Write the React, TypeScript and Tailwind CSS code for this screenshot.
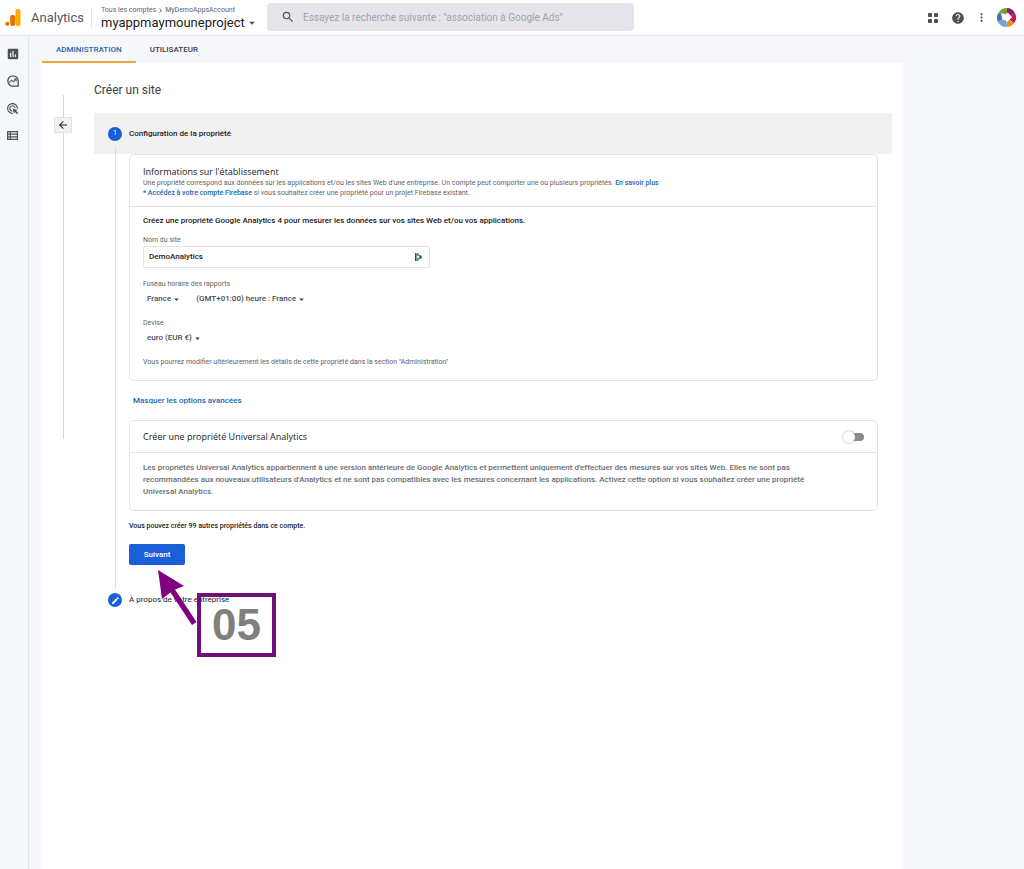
import { useState } from "react";
import {
  MdAdsClick,
  MdArrowBack,
  MdArrowDropDown,
  MdAssessment,
  MdChevronRight,
  MdEdit,
  MdHelp,
  MdMoreVert,
  MdSearch,
} from "react-icons/md";

const timezones = ["(GMT+01:00) heure : France"];
const countries = ["France", "Belgique", "Suisse"];
const currencies = ["euro (EUR €)", "dollar (USD $)"];

const AnalyticsLogo = () => (
  <svg width="16" height="18" viewBox="0 0 16 18" aria-hidden="true">
    <rect x="10.5" y="0" width="5" height="17" rx="2" fill="#f9ab00" />
    <rect x="5.2" y="6" width="5" height="11" rx="2" fill="#e37400" />
    <circle cx="2.3" cy="14.800" r="2.100" fill="#e37400" />
  </svg>
);

const AppsIcon = () => (
  <svg width="10" height="10" viewBox="0 0 10 10" fill="#4f5256" aria-hidden="true">
    <rect x="0" y="0" width="4" height="4" rx="0.7" />
    <rect x="6" y="0" width="4" height="4" rx="0.7" />
    <rect x="0" y="6" width="4" height="4" rx="0.7" />
    <rect x="6" y="6" width="4" height="4" rx="0.7" />
  </svg>
);

const Avatar = () => (
  <svg width="19" height="19" viewBox="0 0 20 20" aria-hidden="true">
    <path d="M10 10 L10 0 A10 10 0 0 1 19 5.5 Z" fill="#8c1d6c" />
    <path d="M10 10 L19 5.5 A10 10 0 0 1 18 16 Z" fill="#c2185b" />
    <path d="M10 10 L18 16 A10 10 0 0 1 10 20 Z" fill="#f08a24" />
    <path d="M10 10 L10 20 A10 10 0 0 1 1 14.5 Z" fill="#6fa4e0" />
    <path d="M10 10 L1 14.5 A10 10 0 0 1 1.5 5 Z" fill="#4a6fb3" />
    <path d="M10 10 L1.5 5 A10 10 0 0 1 10 0 Z" fill="#6fa92f" />
    <path d="M4.500 5.500 L9.500 6.500 L11.500 4.800 L15.800 9.800 L10.500 15 L9.500 13.200 L5.500 12 Z" fill="#fff" />
  </svg>
);

const ExploreIcon = () => (
  <svg width="12" height="12" viewBox="0 0 12 12" fill="none" stroke="#4f5256" aria-hidden="true">
    <path d="M11.2 11.2 H6 A5.2 5.2 0 1 1 11.2 6 Z" strokeWidth="1.3" />
    <path d="M2 7.6 L4.6 5.2 L6.4 6.8 L9 4.2 M6.9 4 H9.2 V6.2" strokeWidth="1.1" />
  </svg>
);

const TableIcon = () => (
  <svg width="11" height="9" viewBox="0 0 11 9" fill="none" stroke="#4f5256" aria-hidden="true">
    <path d="M0.6 0.6 H10.4 V8.4 H0.6 Z M0.6 3.2 H10.4 M0.6 5.8 H10.4 M3.3 0.6 V8.4" strokeWidth="1.2" />
  </svg>
);

const DashlaneIcon = () => (
  <svg width="7" height="8" viewBox="0 0 7 8" fill="#1d5a5c" aria-hidden="true">
    <rect x="0" y="0" width="1.6" height="8" />
    <path d="M2.3 0 L3.6 0.6 V3 H2.3 Z M2.3 4.8 H3.6 V7.4 L2.3 8 Z" />
    <path d="M4.3 1.6 L6.8 3 V5 L4.3 6.4 Z" />
  </svg>
);

const Dropdown = ({ label, options }: { label: string; options: string[] }) => (
  <div className="flex items-center">
    <select
      aria-label={label}
      className="field-sizing-content h-4 appearance-none bg-transparent pr-3 text-[8px] font-medium text-[#4a4d51] outline-none"
    >
      {options.map((o) => (
        <option key={o}>{o}</option>
      ))}
    </select>
    <MdArrowDropDown size={11} className="pointer-events-none -ml-3 text-[#3c4043]" />
  </div>
);

const Header = () => (
  <header className="flex h-9 items-center border-b border-[#dfe3ea] bg-white pr-2 pl-[5px]">
    <AnalyticsLogo />
    <span className="ml-2.5 text-[13px] text-[#55585c]">Analytics</span>
    <div className="ml-[7px] h-5 w-px bg-[#e3e5e8]" />
    <div className="ml-[9px] w-[156px]">
      <div className="flex items-center pt-px text-[7px] leading-[9px] text-[#5f6368]">
        Tous les comptes
        <MdChevronRight size={9} />
        MyDemoAppsAccount
      </div>
      <button type="button" className="flex items-center text-[13px] leading-4 text-[#202124]">
        myappmaymouneproject
        <MdArrowDropDown size={14} className="text-[#4f5256]" />
      </button>
    </div>
    <div className="mr-4 mb-px ml-2.5 flex h-7 max-w-[367px] flex-1 items-center rounded-sm bg-[#e3e5ea] pl-3.5">
      <MdSearch size={14} className="text-[#4f5256]" />
      <input
        type="search"
        aria-label="Rechercher"
        placeholder={'Essayez la recherche suivante : "association à Google Ads"'}
        className="ml-2 flex-1 bg-transparent text-[10px] outline-none placeholder:text-[#9fa3ad]"
      />
    </div>
    <div className="ml-auto flex items-center">
      <button type="button" aria-label="Applications">
        <AppsIcon />
      </button>
      <button type="button" aria-label="Aide" className="ml-[13px]">
        <MdHelp size={14} className="text-[#4f5256]" />
      </button>
      <button type="button" aria-label="Plus" className="ml-2.5">
        <MdMoreVert size={13} className="text-[#4f5256]" />
      </button>
      <button type="button" aria-label="Compte" className="ml-[9px]">
        <Avatar />
      </button>
    </div>
  </header>
);

const Sidebar = () => (
  <nav className="flex w-[29px] shrink-0 flex-col items-center gap-[15px] border-r border-[#dfe3ea] pt-3 pr-[3px]">
    <a href="#rapports" aria-label="Rapports" className="flex h-3 items-center">
      <MdAssessment size={14} className="text-[#4f5256]" />
    </a>
    <a href="#explorer" aria-label="Explorer" className="flex h-3 items-center">
      <ExploreIcon />
    </a>
    <a href="#publicite" aria-label="Publicité" className="flex h-3 items-center">
      <MdAdsClick size={13} className="text-[#4f5256]" />
    </a>
    <a href="#configurer" aria-label="Configurer" className="flex h-3 items-center">
      <TableIcon />
    </a>
  </nav>
);

const PropertyCard = () => {
  const [name, setName] = useState("DemoAnalytics");
  return (
    <section className="rounded-[5px] border border-[#e2e4e6] bg-white">
      <div className="border-b border-[#e2e4e6] px-[13px] pt-[11px] pb-2">
        <h2 className="font-['Open_Sans',sans-serif] text-[9px] leading-3 text-[#202124]">
          Informations sur l'établissement
        </h2>
        <p className="text-[7px] leading-[10px] text-[#5f6368]">
          Une propriété correspond aux données sur les applications et/ou les sites Web d'une
          entreprise. Un compte peut comporter une ou plusieurs propriétés.{" "}
          <a href="#aide" className="font-medium text-[#1967b2]">
            En savoir plus
          </a>
          <br />
          <a href="#firebase" className="font-medium text-[#1967b2]">
            * Accédez à votre compte Firebase
          </a>{" "}
          si vous souhaitez créer une propriété pour un projet Firebase existant.
        </p>
      </div>
      <div className="px-[13px] pt-2 pb-[13px]">
        <p className="text-[8px] leading-3 font-medium text-[#202124]">
          Créez une propriété Google Analytics 4 pour mesurer les données sur vos sites Web et/ou
          vos applications.
        </p>
        <label htmlFor="site" className="mt-2 block text-[7px] leading-[10px] text-[#5f6368]">
          Nom du site
        </label>
        <div className="mt-px flex h-[22px] max-w-[287px] items-center rounded-xs border border-[#e2e4e6] pr-[7px] pl-[5px]">
          <input
            id="site"
            type="text"
            value={name}
            onChange={(e) => setName(e.target.value)}
            className="flex-1 text-[8px] font-medium text-[#202124] outline-none"
          />
          <DashlaneIcon />
        </div>
        <p className="mt-[11px] text-[7px] leading-[10px] text-[#5f6368]">
          Fuseau horaire des rapports
        </p>
        <div className="mt-0.5 flex gap-3.5 pl-1">
          <Dropdown label="Pays" options={countries} />
          <Dropdown label="Fuseau horaire des rapports" options={timezones} />
        </div>
        <p className="mt-[11px] text-[7px] leading-[10px] text-[#5f6368]">Devise</p>
        <div className="mt-0.5 flex pl-1">
          <Dropdown label="Devise" options={currencies} />
        </div>
        <p className="mt-[11px] text-[7px] leading-[10px] text-[#5f6368]">
          Vous pourrez modifier ultérieurement les détails de cette propriété dans la section
          "Administration"
        </p>
      </div>
    </section>
  );
};

const UniversalCard = () => {
  const [enabled, setEnabled] = useState(false);
  return (
    <section className="rounded-[5px] border border-[#e2e4e6] bg-white">
      <label className="flex h-8 items-center justify-between border-b border-[#e2e4e6] px-[13px] font-['Open_Sans',sans-serif] text-[9px] text-[#202124]">
        Créer une propriété Universal Analytics
        <input
          type="checkbox"
          role="switch"
          checked={enabled}
          onChange={(e) => setEnabled(e.target.checked)}
          className="flex h-2 w-5 appearance-none items-center rounded-full bg-[#8a8a8a] before:size-3 before:-ml-px before:rounded-full before:bg-white before:shadow-[0_0_2px_#999] checked:justify-end checked:bg-[#1a5fd8]"
        />
      </label>
      <p className="px-[13px] pt-[9px] pb-3 text-[8px] leading-3 font-medium text-[#6a6e73]">
        Les propriétés Universal Analytics appartiennent à une version antérieure de Google
        Analytics et permettent uniquement d'effectuer des mesures sur vos sites Web. Elles ne sont
        pas
        <br />
        recommandées aux nouveaux utilisateurs d'Analytics et ne sont pas compatibles avec les
        mesures concernant les applications. Activez cette option si vous souhaitez créer une
        propriété
        <br />
        Universal Analytics.
      </p>
    </section>
  );
};

const StepMarker = () => (
  <div className="pointer-events-none absolute top-full left-[29px] mt-1">
    <svg width="44" height="60" viewBox="0 0 44 60" aria-hidden="true">
      <path d="M0 1 L26 17 L17 20.500 L38.500 53 L34 56 L12.500 23.500 L4 30 Z" fill="#800080" />
    </svg>
    <div className="absolute top-6 left-[39px] flex h-16 w-[79px] items-center justify-center border-4 border-[#6f0f78] font-['Liberation_Sans',sans-serif] text-[44px] leading-none font-bold text-[#7f7f7f]">
      05
    </div>
  </div>
);

export default function App() {
  return (
    <div className="flex min-h-screen flex-col bg-[#f5f7fb] font-[Roboto,sans-serif] text-[#202124]">
      <Header />
      <div className="flex flex-1">
        <Sidebar />
        <main className="ml-[13px] flex max-w-[861px] flex-1 flex-col">
          <div className="flex h-[27px] text-[8px] font-medium">
            <a
              href="#administration"
              className="flex items-center border-b-2 border-[#eda73c] px-3.5 pt-0.5 text-[#1967b2]"
            >
              ADMINISTRATION
            </a>
            <a href="#utilisateur" className="flex items-center px-3.5 text-[#3c4043]">
              UTILISATEUR
            </a>
          </div>
          <div className="flex flex-1 bg-white pr-[11px]">
            <div className="flex w-[52px] shrink-0 flex-col items-start pt-8 pl-3">
              <div className="flex flex-col items-center">
                <div className="h-[22px] w-px bg-[#d5d7da]" />
                <button
                  type="button"
                  aria-label="Retour"
                  className="flex h-4 w-[18px] items-center justify-center border border-[#e2e2e2] bg-[#f1f1f1]"
                >
                  <MdArrowBack size={12} />
                </button>
                <div className="h-[306px] w-px bg-[#d5d7da]" />
              </div>
            </div>
            <div className="flex-1 pt-4">
              <h1 className="text-[12px] leading-[22px] text-[#3c4043]">Créer un site</h1>
              <div className="mt-3 flex h-[41px] items-center gap-[7px] bg-[#f1f1f1] px-3.5">
                <span className="flex size-3.5 items-center justify-center rounded-full bg-[#1a5fd8] text-[7px] text-white">
                  1
                </span>
                <span className="text-[8px] font-medium">Configuration de la propriété</span>
              </div>
              <div className="flex gap-[7px] px-3.5">
                <div className="flex w-3.5 shrink-0 justify-center">
                  <div className="-mt-2 mb-1 w-px bg-[#e0e0e0]" />
                </div>
                <div className="flex-1 pb-7">
                  <PropertyCard />
                  <button
                    type="button"
                    className="my-3.5 block px-1 text-[8px] leading-[11px] font-medium text-[#1967b2]"
                  >
                    Masquer les options avancées
                  </button>
                  <UniversalCard />
                  <p className="mt-2 text-[7px] leading-[14px] font-medium">
                    Vous pouvez créer 99 autres propriétés dans ce compte.
                  </p>
                  <div className="relative mt-[11px] w-fit">
                    <button
                      type="button"
                      className="block h-[21px] w-14 rounded-xs bg-[#1a5fd8] text-[8px] font-medium text-white"
                    >
                      Suivant
                    </button>
                    <StepMarker />
                  </div>
                </div>
              </div>
              <div className="flex items-center gap-[7px] px-3.5">
                <span className="flex size-3.5 items-center justify-center rounded-full bg-[#1a5fd8] text-white">
                  <MdEdit size={9} />
                </span>
                <span className="text-[8px]">À propos de votre entreprise</span>
              </div>
            </div>
          </div>
        </main>
      </div>
    </div>
  );
}
